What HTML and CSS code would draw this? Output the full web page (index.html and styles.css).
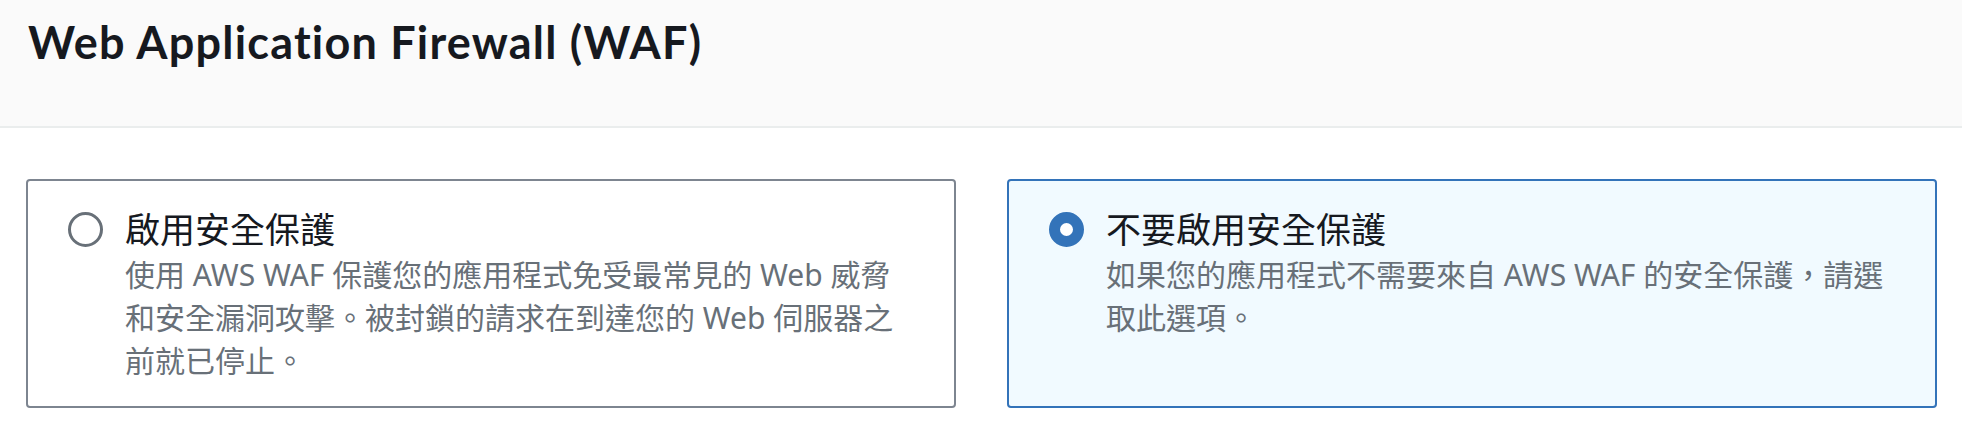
FILE: index.html
```html
<!DOCTYPE html>
<html lang="zh-Hant">
<head>
<meta charset="utf-8">
<title>Web Application Firewall (WAF)</title>
<link rel="stylesheet" href="styles.css">
</head>
<body>
<header class="header">
  <h2 class="title">Web Application Firewall (WAF)</h2>
</header>
<main class="tiles">
  <label class="tile">
    <span class="radio"></span>
    <span class="tile-text">
      <span class="tile-label">啟用安全保護</span>
      <span class="tile-desc">使用 AWS WAF 保護您的應用程式免受最常見的 Web 威脅和安全漏洞攻擊。被封鎖的請求在到達您的 Web 伺服器之前就已停止。</span>
    </span>
  </label>
  <label class="tile tile-selected">
    <span class="radio radio-checked"></span>
    <span class="tile-text">
      <span class="tile-label">不要啟用安全保護</span>
      <span class="tile-desc">如果您的應用程式不需要來自 AWS WAF 的安全保護，請選取此選項。</span>
    </span>
  </label>
</main>
</body>
</html>
```

FILE: styles.css
```css
* { box-sizing: border-box; }

html, body {
  margin: 0;
  padding: 0;
  background: #ffffff;
}

body {
  width: 1962px;
  height: 432px;
  overflow: hidden;
  font-family: "Noto Sans", "Noto Sans CJK TC", sans-serif;
  color: #16191f;
}

.header {
  height: 128px;
  background: #fafafa;
  border-bottom: 2px solid #eaeded;
  padding: 20px 0 0 28px;
}

.title {
  margin: 0;
  font-family: Lato, "Noto Sans CJK TC", sans-serif;
  font-weight: 700;
  font-size: 45px;
  line-height: 44px;
  letter-spacing: 1.2px;
  font-variant-ligatures: none;
  font-feature-settings: "liga" 0, "clig" 0;
  color: #16191f;
}

.tiles {
  display: grid;
  grid-template-columns: 1fr 1fr;
  column-gap: 51px;
  padding: 51px 25px 0 26px;
}

.tile {
  display: flex;
  align-items: flex-start;
  gap: 22px;
  height: 229px;
  padding: 26px 39px 0 40px;
  border: 2px solid #7d8590;
  border-radius: 4px;
  background: #ffffff;
}

.tile-selected {
  border-color: #3373b9;
  background: #f1faff;
}

.radio {
  flex: none;
  width: 35px;
  height: 35px;
  margin-top: 5px;
  border: 3px solid #687078;
  border-radius: 50%;
  background: #ffffff;
}

.radio-checked {
  border: 11px solid #3373b9;
}

.tile-text {
  display: flex;
  flex-direction: column;
  min-width: 0;
}

.tile-label {
  font-size: 35px;
  line-height: 46px;
  color: #16191f;
}

.tile-desc {
  font-size: 30px;
  line-height: 43px;
  color: #687078;
}
```
